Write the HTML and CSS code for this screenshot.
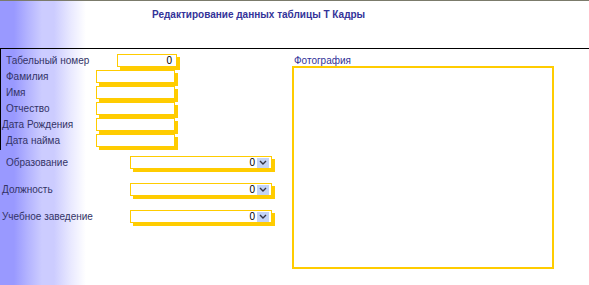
FILE: index.html
```html
<!DOCTYPE html>
<html lang="ru">
<head>
  <meta charset="UTF-8" />
  <title>Редактирование данных таблицы Т Кадры</title>
  <link rel="stylesheet" href="styles.css">
</head>
<body>
  <header class="form-header">
    <h1>Редактирование данных таблицы Т Кадры</h1>
  </header>

  <main class="detail">
    <div class="left-col">
      <!-- text fields -->
      <div class="text-fields">
        <div class="row row-wide">
          <label>Табельный номер</label>
          <div class="field num">0</div>
        </div>
        <div class="row">
          <label>Фамилия</label>
          <div class="field"></div>
        </div>
        <div class="row">
          <label>Имя</label>
          <div class="field"></div>
        </div>
        <div class="row">
          <label>Отчество</label>
          <div class="field"></div>
        </div>
        <div class="row">
          <label class="tight">Дата Рождения</label>
          <div class="field"></div>
        </div>
        <div class="row">
          <label>Дата найма</label>
          <div class="field"></div>
        </div>
      </div>

      <!-- lookup combos -->
      <div class="combo-fields">
        <div class="row combo-row">
          <label>Образование</label>
          <div class="combo"><span>0</span><button class="drop"><svg width="8" height="5" viewBox="0 0 8 5"><path d="M1 1 L4 4 L7 1" fill="none" stroke="#334" stroke-width="1.4"/></svg></button></div>
        </div>
        <div class="row combo-row">
          <label class="tight">Должность</label>
          <div class="combo"><span>0</span><button class="drop"><svg width="8" height="5" viewBox="0 0 8 5"><path d="M1 1 L4 4 L7 1" fill="none" stroke="#334" stroke-width="1.4"/></svg></button></div>
        </div>
        <div class="row combo-row">
          <label class="tight">Учебное заведение</label>
          <div class="combo"><span>0</span><button class="drop"><svg width="8" height="5" viewBox="0 0 8 5"><path d="M1 1 L4 4 L7 1" fill="none" stroke="#334" stroke-width="1.4"/></svg></button></div>
        </div>
      </div>
    </div>

    <div class="photo">
      <div class="photo-label">Фотография</div>
      <div class="photo-box"></div>
    </div>
  </main>
</body>
</html>
```

FILE: styles.css
```css
/* BASE */
* {
  margin: 0;
  padding: 0;
  box-sizing: border-box;
}
html, body {
  height: 100%;
}
body {
  font-family: "Liberation Sans", Arial, sans-serif;
  font-size: 10px;
  color: #333366;
  overflow: hidden;
  background: linear-gradient(to right, #9999ff 0, #9999ff 14px, #b4b4ff 28px, #ccccff 42px, #ccccff 54px, #e8e8ff 70px, #fff 86px);
}

/* HEADER */
.form-header {
  height: 48px;
  border-top: 1px solid #7b7b6b;
  padding: 8px 0 0 152px;
}
.form-header h1 {
  font-size: 10px;
  font-weight: bold;
  color: #333399;
  line-height: 12px;
}

/* DETAIL */
.detail {
  display: flex;
  border-top: 1px solid #000;
}
.left-col {
  width: 292px;
}
.text-fields {
  border-left: 1px solid #000;
  padding-top: 5px;
  height: 101px;
}
.row {
  display: flex;
  align-items: center;
  height: 13px;
  margin-bottom: 3px;
}
.row label {
  width: 95px;
  padding-left: 5px;
  line-height: 12px;
  white-space: nowrap;
}
.row label.tight {
  padding-left: 1px;
}
.row-wide label {
  width: 116px;
}
.field {
  width: 79px;
  height: 13px;
  background: #fff;
  border: 1px solid #ffcc00;
  box-shadow: 3px 3px 0 #ffcc00;
  text-align: right;
  padding-right: 4px;
  line-height: 11px;
  color: #000;
}
.field.num {
  width: 60px;
}

/* COMBOS */
.combo-fields {
  margin-top: 6px;
}
.combo-row {
  margin-bottom: 14px;
}
.combo-row label {
  width: 130px;
  padding-left: 6px;
}
.combo-row label.tight {
  padding-left: 2px;
}
.combo {
  width: 142px;
  height: 13px;
  background: #fff;
  border: 1px solid #ffcc00;
  box-shadow: 3px 3px 0 #ffcc00;
  display: flex;
  justify-content: flex-end;
  align-items: center;
  gap: 2px;
  padding-right: 2px;
  color: #000;
  line-height: 11px;
}
.drop {
  width: 12px;
  height: 10px;
  border: none;
  background: #c3d3f7;
  display: flex;
  align-items: center;
  justify-content: center;
}

/* PHOTO */
.photo {
  padding-top: 6px;
}
.photo-label {
  padding-left: 2px;
  line-height: 11px;
  color: #333399;
}
.photo-box {
  width: 262px;
  height: 203px;
  border: 2px solid #ffcc00;
  background: #fff;
}
```
